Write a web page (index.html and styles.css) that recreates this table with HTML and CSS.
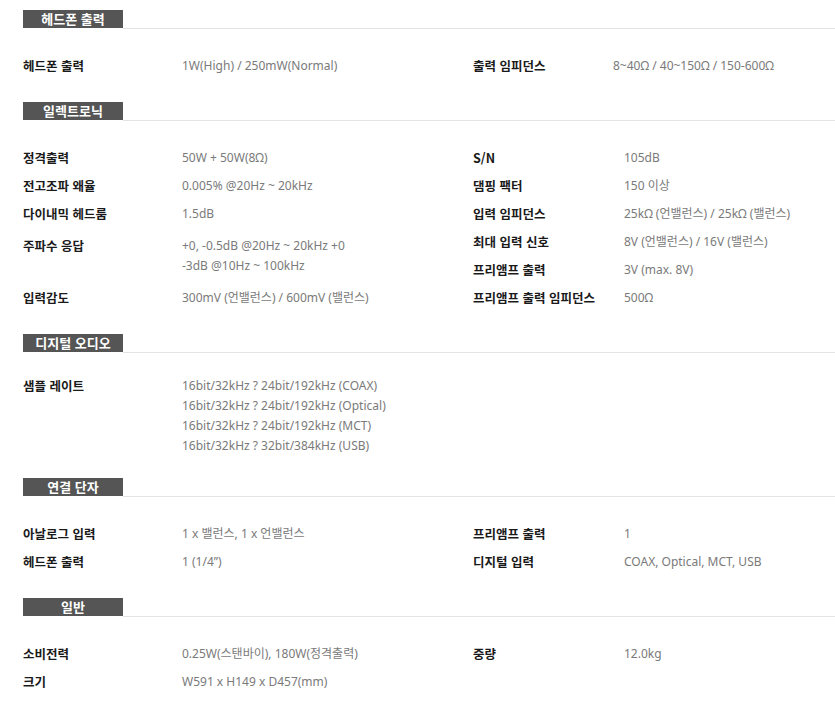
FILE: index.html
```html
<!DOCTYPE html>
<html lang="ko">
<head>
<meta charset="utf-8">
<title>스펙</title>
<link rel="stylesheet" href="styles.css">
</head>
<body>
<div class="page">

  <section class="spec">
    <div class="spec-head"><h2 class="spec-title">헤드폰 출력</h2><span class="spec-rule"></span></div>
    <div class="spec-body spec-body--narrow">
      <div class="col col--left">
        <div class="row"><div class="label">헤드폰 출력</div><div class="value">1W(High) / 250mW(Normal)</div></div>
      </div>
      <div class="col col--right">
        <div class="row"><div class="label">출력 임피던스</div><div class="value">8~40Ω / 40~150Ω / 150-600Ω</div></div>
      </div>
    </div>
  </section>

  <section class="spec">
    <div class="spec-head"><h2 class="spec-title">일렉트로닉</h2><span class="spec-rule"></span></div>
    <div class="spec-body">
      <div class="col col--left">
        <div class="row"><div class="label">정격출력</div><div class="value">50W + 50W(8Ω)</div></div>
        <div class="row"><div class="label">전고조파 왜율</div><div class="value">0.005% @20Hz ~ 20kHz</div></div>
        <div class="row"><div class="label">다이내믹 헤드룸</div><div class="value">1.5dB</div></div>
        <div class="row row--spaced"><div class="label">주파수 응답</div><div class="value">+0, -0.5dB @20Hz ~ 20kHz +0<br>-3dB @10Hz ~ 100kHz</div></div>
        <div class="row"><div class="label">입력감도</div><div class="value">300mV (언밸런스) / 600mV (밸런스)</div></div>
      </div>
      <div class="col col--right">
        <div class="row"><div class="label">S/N</div><div class="value">105dB</div></div>
        <div class="row"><div class="label">댐핑 팩터</div><div class="value">150 이상</div></div>
        <div class="row"><div class="label">입력 임피던스</div><div class="value">25kΩ (언밸런스) / 25kΩ (밸런스)</div></div>
        <div class="row"><div class="label">최대 입력 신호</div><div class="value">8V (언밸런스) / 16V (밸런스)</div></div>
        <div class="row"><div class="label">프리앰프 출력</div><div class="value">3V (max. 8V)</div></div>
        <div class="row"><div class="label">프리앰프 출력 임피던스</div><div class="value">500Ω</div></div>
      </div>
    </div>
  </section>

  <section class="spec">
    <div class="spec-head"><h2 class="spec-title">디지털 오디오</h2><span class="spec-rule"></span></div>
    <div class="spec-body">
      <div class="col col--left">
        <div class="row row--flush"><div class="label">샘플 레이트</div><div class="value">16bit/32kHz ? 24bit/192kHz (COAX)<br>16bit/32kHz ? 24bit/192kHz (Optical)<br>16bit/32kHz ? 24bit/192kHz (MCT)<br>16bit/32kHz ? 32bit/384kHz (USB)</div></div>
      </div>
    </div>
  </section>

  <section class="spec">
    <div class="spec-head"><h2 class="spec-title">연결 단자</h2><span class="spec-rule"></span></div>
    <div class="spec-body">
      <div class="col col--left">
        <div class="row"><div class="label">아날로그 입력</div><div class="value">1 x 밸런스, 1 x 언밸런스</div></div>
        <div class="row"><div class="label">헤드폰 출력</div><div class="value">1 (1/4”)</div></div>
      </div>
      <div class="col col--right">
        <div class="row"><div class="label">프리앰프 출력</div><div class="value">1</div></div>
        <div class="row"><div class="label">디지털 입력</div><div class="value">COAX, Optical, MCT, USB</div></div>
      </div>
    </div>
  </section>

  <section class="spec">
    <div class="spec-head"><h2 class="spec-title">일반</h2><span class="spec-rule"></span></div>
    <div class="spec-body">
      <div class="col col--left">
        <div class="row"><div class="label">소비전력</div><div class="value">0.25W(스탠바이), 180W(정격출력)</div></div>
        <div class="row"><div class="label">크기</div><div class="value">W591 x H149 x D457(mm)</div></div>
      </div>
      <div class="col col--right">
        <div class="row"><div class="label">중량</div><div class="value">12.0kg</div></div>
      </div>
    </div>
  </section>

</div>
</body>
</html>
```
FILE: styles.css
```css
* { box-sizing: border-box; }

html, body {
  margin: 0;
  padding: 0;
  background: #fff;
}

body {
  font-family: "Noto Sans", "Noto Sans CJK KR", sans-serif;
  font-size: 12px;
  color: #222;
}

.page {
  padding: 10px 0 0 23px;
}

.spec {
  margin-bottom: 22px;
}

.spec-head {
  display: flex;
  align-items: flex-end;
  height: 19px;
  margin-bottom: 23px;
}

.spec-title {
  margin: 0 0 1px 0;
  width: 100px;
  height: 18px;
  background: #555;
  color: #fff;
  font-family: "Noto Sans CJK KR", sans-serif;
  font-size: 13px;
  font-weight: 700;
  line-height: 18px;
  text-align: center;
  letter-spacing: 0;
}

.spec-rule {
  flex: 1;
  height: 1px;
  background: #e4e4e4;
}

.spec-body {
  display: flex;
  align-items: flex-start;
}

.col {
  display: flex;
  flex-direction: column;
}

.col--left {
  width: 450px;
}

.col--right {
  flex: 1;
}

.row {
  display: flex;
  align-items: flex-start;
  padding: 4px 0;
  line-height: 20px;
}

.row--spaced {
  padding: 8px 0;
}

.row--flush {
  padding: 0;
}

.label {
  font-family: "Noto Sans CJK KR", sans-serif;
  font-size: 12.5px;
  font-weight: 700;
  color: #1a1a1a;
  flex: none;
}

.col--left .label {
  width: 159px;
}

.col--right .label {
  width: 151px;
}

.spec-body--narrow .col--right .label {
  width: 140px;
}

.value {
  color: #7a7a7a;
}
```
